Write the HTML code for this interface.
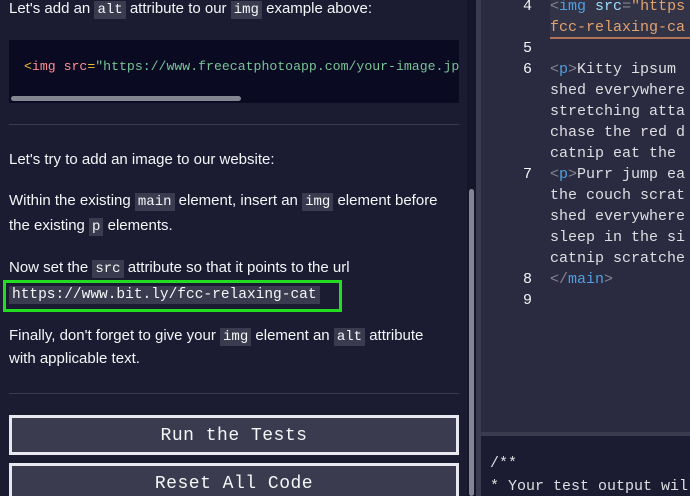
<!DOCTYPE html>
<html><head><style>
*{margin:0;padding:0;box-sizing:border-box}
html,body{width:690px;height:496px;overflow:hidden}
body{background:#1b1b32;position:relative;font-family:"Liberation Sans",sans-serif;color:#f5f6f7}
.l{position:absolute;left:0;top:0;width:467px;height:496px;background:#1b1b32}
.p{position:absolute;left:9px;font-size:15px;line-height:24px;white-space:nowrap}
code{font-family:"Liberation Mono",monospace;font-size:14px;background:#3b3b4f;padding:1px 3px}
.cb{position:absolute;left:9px;top:40px;width:450px;height:63px;background:#0a0a23;overflow:hidden}
.cb pre{position:absolute;left:15px;top:19px;font-family:"Liberation Mono",monospace;font-size:13.2px;color:#77c494}
.hr{position:absolute;left:9px;width:450px;height:1px;background:#3b3b4f}
.btn{position:absolute;left:9px;width:450px;height:40px;border:3px solid #e8e8ee;background:#3b3b4f;outline:1px solid #1b1b32;text-align:center;font-family:"Liberation Mono",monospace;font-size:18px;line-height:36px;color:#f5f6f7;letter-spacing:0.5px}
.ed{position:absolute;left:481px;top:0;width:209px;height:432px;background:#2a2a40}
.ln{position:absolute;left:512px;width:20px;text-align:right;font-family:"Liberation Mono",monospace;font-size:15px;color:#f5f6f7}
.cd{position:absolute;left:550px;font-family:"Liberation Mono",monospace;font-size:15px;color:#dfdfe2;white-space:pre}
.g{color:#858591}.b{color:#4fa0de}.o{color:#e2a26e}.s{color:#9cdcfe}
</style></head><body>
<div class="l">
<div class="p" style="top:-3px">Let's add an <code>alt</code> attribute to our <code>img</code> example above:</div>
<div class="cb"><pre><span style="color:#f1be32">&lt;</span><span style="color:#ff8f8f">img src</span><span style="color:#f1be32">=</span>"https://www.freecatphotoapp.com/your-image.jpg"</pre>
<div style="position:absolute;left:2px;top:56px;width:230px;height:5px;border-radius:3px;background:#858591"></div></div>
<div class="hr" style="top:124px"></div>
<div class="p" style="top:148px">Let's try to add an image to our website:</div>
<div class="p" style="top:189px">Within the existing <code>main</code> element, insert an <code>img</code> element before</div>
<div class="p" style="top:214px">the existing <code>p</code> elements.</div>
<div class="p" style="top:256px">Now set the <code>src</code> attribute so that it points to the url</div>
<div style="position:absolute;left:3px;top:280px;width:339px;height:32px;border:3px solid #22dd22"></div>
<div class="p" style="top:282px;left:9px"><code style="font-size:14.5px">https://www.bit.ly/fcc-relaxing-cat</code></div>
<div class="p" style="top:324px">Finally, don't forget to give your <code>img</code> element an <code>alt</code> attribute</div>
<div class="p" style="top:347px">with applicable text.</div>
<div class="hr" style="top:393px"></div>
<div class="btn" style="top:415px">Run the Tests</div>
<div class="btn" style="top:463px">Reset All Code</div>
</div>
<div style="position:absolute;left:467px;top:0;width:9px;height:496px;background:#16162a"></div>
<div style="position:absolute;left:469px;top:189px;width:5px;height:307px;border-radius:3px;background:#858591"></div>
<div style="position:absolute;left:476px;top:0;width:5px;height:496px;background:#3b3b4f"></div>
<div class="ed"></div>
<div style="position:absolute;left:481px;top:432px;width:209px;height:4px;background:#3b3b4f"></div>
<div style="position:absolute;left:481px;top:436px;width:209px;height:60px;background:#1b1b32"></div>
<div style="position:absolute;left:550px;top:0;width:140px;height:39px;background:#3b3b4f;opacity:.5"></div>
<div style="position:absolute;left:550px;top:37px;width:140px;height:2px;background:#b0705a"></div>
<div class="ln" style="top:-2px">4</div>
<div class="cd" style="top:-2px"><span class="g">&lt;</span><span class="b">img</span> <span class="s">src</span><span class="g">=</span><span class="o">"https</span></div>
<div class="cd" style="top:19px"><span class="o">fcc-relaxing-ca</span></div>
<div class="ln" style="top:40px">5</div>
<div class="ln" style="top:61px">6</div>
<div class="cd" style="top:61px"><span class="g">&lt;</span><span class="b">p</span><span class="g">&gt;</span>Kitty ipsum</div>
<div class="cd" style="top:82px">shed everywhere</div>
<div class="cd" style="top:103px">stretching atta</div>
<div class="cd" style="top:124px">chase the red d</div>
<div class="cd" style="top:145px">catnip eat the</div>
<div class="ln" style="top:166px">7</div>
<div class="cd" style="top:166px"><span class="g">&lt;</span><span class="b">p</span><span class="g">&gt;</span>Purr jump ea</div>
<div class="cd" style="top:187px">the couch scrat</div>
<div class="cd" style="top:208px">shed everywhere</div>
<div class="cd" style="top:229px">sleep in the si</div>
<div class="cd" style="top:250px">catnip scratche</div>
<div class="ln" style="top:271px">8</div>
<div class="cd" style="top:271px"><span class="g">&lt;/</span><span class="b">main</span><span class="g">&gt;</span></div>
<div class="ln" style="top:292px">9</div>
<div class="cd" style="left:490px;top:455px;font-size:15px">/**</div>
<div class="cd" style="left:490px;top:478px;font-size:15px">* Your test output will</div>
</body></html>
